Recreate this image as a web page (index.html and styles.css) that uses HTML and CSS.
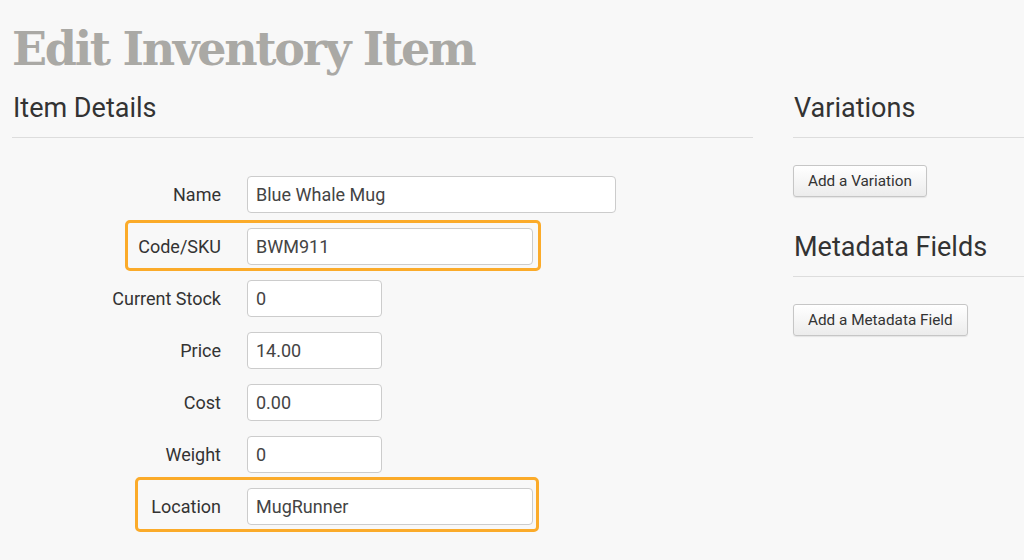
FILE: index.html
```html
<!DOCTYPE html>
<html>
<head>
<meta charset="utf-8">
<link rel="stylesheet" href="styles.css">
</head>
<body>
<div class="page">
  <h1 class="title">Edit Inventory Item</h1>
  <div class="columns">
    <section class="main">
      <h2 class="section-title">Item Details</h2>
      <form class="form">
        <div class="row">
          <label class="label">Name</label>
          <input class="input input-name" type="text" value="Blue Whale Mug">
        </div>
        <div class="row">
          <span class="highlight hl-code"></span>
          <label class="label">Code/SKU</label>
          <input class="input input-wide" type="text" value="BWM911">
        </div>
        <div class="row">
          <label class="label">Current Stock</label>
          <input class="input input-small" type="text" value="0">
        </div>
        <div class="row">
          <label class="label">Price</label>
          <input class="input input-small" type="text" value="14.00">
        </div>
        <div class="row">
          <label class="label">Cost</label>
          <input class="input input-small" type="text" value="0.00">
        </div>
        <div class="row">
          <label class="label">Weight</label>
          <input class="input input-small" type="text" value="0">
        </div>
        <div class="row">
          <span class="highlight hl-location"></span>
          <label class="label">Location</label>
          <input class="input input-wide" type="text" value="MugRunner">
        </div>
      </form>
    </section>
    <aside class="side">
      <h2 class="section-title">Variations</h2>
      <div class="side-body">
        <button class="btn" type="button">Add a Variation</button>
      </div>
      <h2 class="section-title">Metadata Fields</h2>
      <div class="side-body">
        <button class="btn" type="button">Add a Metadata Field</button>
      </div>
    </aside>
  </div>
</div>
</body>
</html>
```

FILE: styles.css
```css
html {
  overflow: hidden;
  background: #f8f8f8;
}
body {
  margin: 0;
  padding: 0;
  font-family: Roboto, "Liberation Sans", sans-serif;
  color: #333;
}
.page {
  padding: 0 0 40px 12px;
}
.title {
  margin: 0;
  padding-top: 19px;
  font-family: "DejaVu Serif", serif;
  font-weight: bold;
  font-size: 46px;
  line-height: 60px;
  color: #aaa9a5;
  letter-spacing: -2.3px;
  white-space: nowrap;
}
.columns {
  display: flex;
  gap: 40px;
}
.main {
  width: 741px;
  flex: none;
}
.side {
  flex: 1;
}
.section-title {
  margin: 0;
  font-weight: 400;
  font-size: 27px;
  line-height: 34px;
  padding: 12px 0 12px 1px;
  border-bottom: 1px solid #dddddd;
  color: #333;
}
.form {
  display: flex;
  flex-direction: column;
  gap: 15px;
  padding-top: 38px;
}
.row {
  position: relative;
  display: flex;
  align-items: center;
  gap: 26px;
  height: 37px;
}
.label {
  width: 209px;
  flex: none;
  text-align: right;
  font-size: 18px;
  color: #333;
  position: relative;
}
.input {
  box-sizing: border-box;
  height: 37px;
  border: 1px solid #cccccc;
  border-radius: 4px;
  background: #fff;
  padding: 0 8px;
  font-family: Roboto, "Liberation Sans", sans-serif;
  font-size: 18px;
  color: #444;
  position: relative;
}
.input-name { width: 369px; }
.input-wide { width: 286px; }
.input-small { width: 135px; }
.highlight {
  position: absolute;
  border: 3px solid #fbab2a;
  border-radius: 5px;
  box-sizing: border-box;
}
.hl-code {
  left: 113px;
  top: -8px;
  width: 416px;
  height: 51px;
}
.hl-location {
  left: 123px;
  top: -11px;
  width: 404px;
  height: 55px;
}
.side-body {
  padding: 27px 0 21px 0;
}
.btn {
  font-family: Roboto, "Liberation Sans", sans-serif;
  font-size: 15.3px;
  color: #333;
  height: 32px;
  padding: 0 14px;
  border: 1px solid #c6c6c6;
  border-radius: 3px;
  background: linear-gradient(#ffffff, #ececec);
  box-shadow: 0 1px 1px rgba(0,0,0,0.08);
}
```
